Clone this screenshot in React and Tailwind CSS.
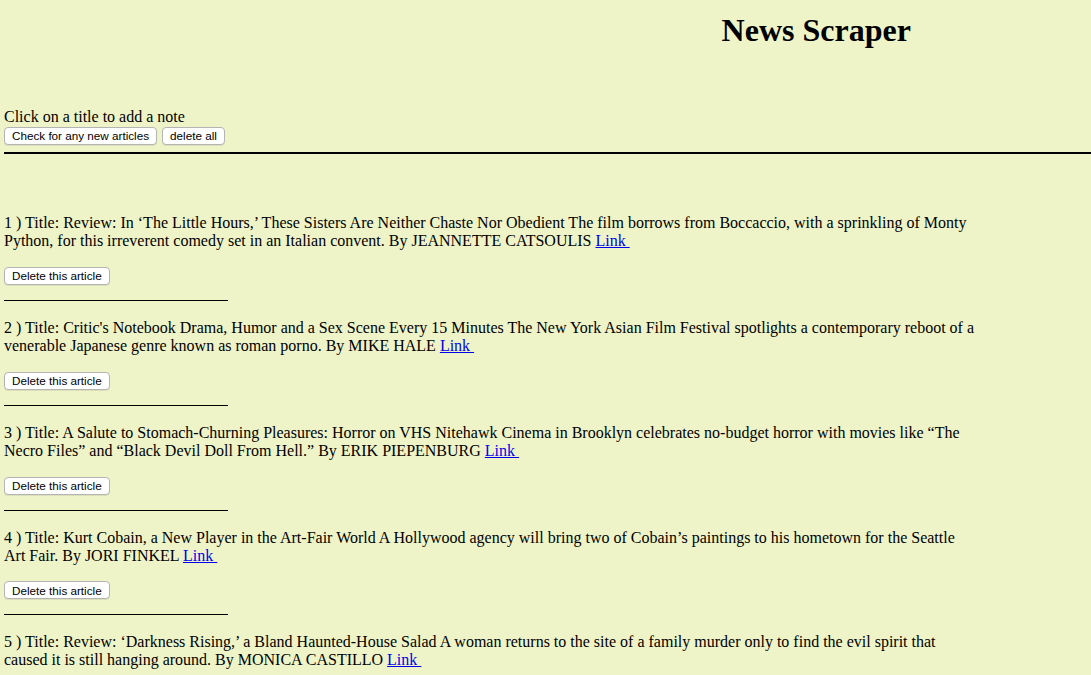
import React from 'react';

const articles = [
  {
    n: 1,
    text: 'Review: In ‘The Little Hours,’ These Sisters Are Neither Chaste Nor Obedient The film borrows from Boccaccio, with a sprinkling of Monty Python, for this irreverent comedy set in an Italian convent. By JEANNETTE CATSOULIS',
  },
  {
    n: 2,
    text: "Critic's Notebook Drama, Humor and a Sex Scene Every 15 Minutes The New York Asian Film Festival spotlights a contemporary reboot of a venerable Japanese genre known as roman porno. By MIKE HALE",
  },
  {
    n: 3,
    text: 'A Salute to Stomach-Churning Pleasures: Horror on VHS Nitehawk Cinema in Brooklyn celebrates no-budget horror with movies like “The Necro Files” and “Black Devil Doll From Hell.” By ERIK PIEPENBURG',
  },
  {
    n: 4,
    text: 'Kurt Cobain, a New Player in the Art-Fair World A Hollywood agency will bring two of Cobain’s paintings to his hometown for the Seattle Art Fair. By JORI FINKEL',
  },
  {
    n: 5,
    text: 'Review: ‘Darkness Rising,’ a Bland Haunted-House Salad A woman returns to the site of a family murder only to find the evil spirit that caused it is still hanging around. By MONICA CASTILLO',
  },
];

const Btn = ({ children }) => (
  <button className="h-[18px] px-[7px] rounded-[4px] border border-[#b4b4b4] bg-white text-[11.7px] leading-none text-black font-['Liberation_Sans',Arial,sans-serif] shadow-[0_1px_0_rgba(0,0,0,0.08)]">
    {children}
  </button>
);

export default function App() {
  return (
    <div className="min-h-screen bg-[#eff4c8] px-[4px] pb-10 text-black text-[16px] leading-[18px] font-['Liberation_Serif','Times_New_Roman',serif]">
      <div className="grid grid-cols-2">
        <h1 className="col-start-2 text-center text-[32px] leading-[37px] font-bold pt-[12px]">News Scraper</h1>
      </div>

      <p className="mt-[59px]">Click on a title to add a note</p>
      <div className="flex gap-[5px] mt-[1px]">
        <Btn>Check for any new articles</Btn>
        <Btn>delete all</Btn>
      </div>
      <div className="h-[2px] bg-black mt-[7px] -mr-[4px]" />

      <div className="mt-[60px]">
        {articles.map((a, i) => (
          <div key={a.n} className={i > 0 ? 'mt-[18px]' : ''}>
            <p className="w-[972px]">
              {a.n} ) Title: {a.text}{' '}
              <a href="#" className="text-[#0000ee] underline">Link&nbsp;</a>
            </p>
            <div className="mt-[16px]">
              <Btn>Delete this article</Btn>
            </div>
            <div className="mt-[15px] h-[1px] w-[224px] bg-black" />
          </div>
        ))}
      </div>
    </div>
  );
}
